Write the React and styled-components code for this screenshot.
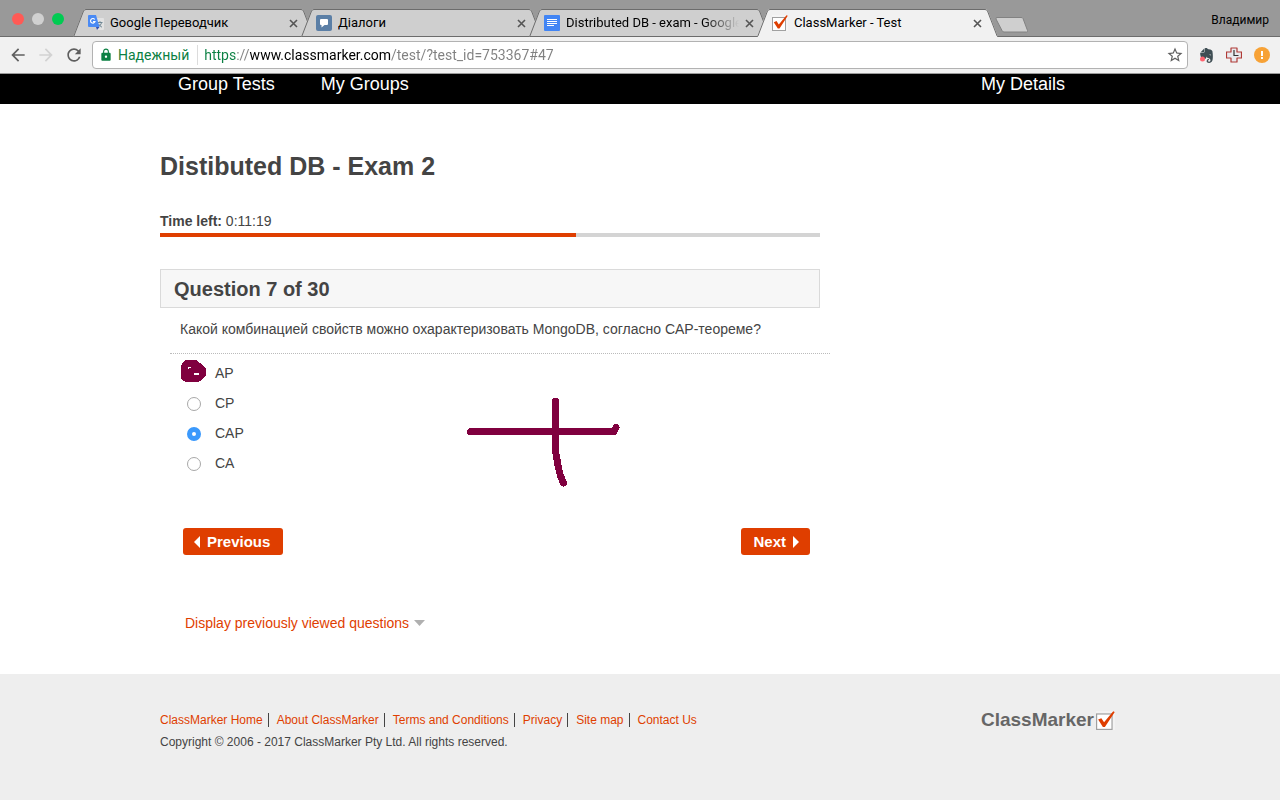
import React, { useState } from "react";
import styled, { createGlobalStyle, css } from "styled-components";
import { MdArrowBack, MdArrowForward, MdRefresh, MdStarBorder, MdLock } from "react-icons/md";
import { SiEvernote } from "react-icons/si";

const GlobalStyle = createGlobalStyle`
  *, *::before, *::after { box-sizing: border-box; }
  body {
    margin: 0;
    background: #fff;
    color: #444;
    font: 14px/20px "Liberation Sans", Arial, sans-serif;
  }
  button { font: inherit; border: 0; padding: 0; cursor: pointer; }
`;

const accent = "#df3e00";
const ink = "#80003f";
const edge = "#6c6c6c";

const Page = styled.div`
  display: flex;
  flex-direction: column;
  min-height: 100vh;
`;

/* Browser chrome */

const Chrome = styled.header`
  font-family: Roboto, sans-serif;
`;

const TabStrip = styled.div`
  display: flex;
  align-items: flex-end;
  height: 37px;
  padding-left: 12px;
  background: #999;
  box-shadow: inset 0 -1px ${edge};
`;

const WindowButtons = styled.div`
  display: flex;
  gap: 8px;
  align-self: center;
  margin-right: 9px;
`;

const WindowButton = styled.button`
  width: 12px;
  height: 12px;
  border-radius: 50%;
  background: ${(p) => p.$color};
`;

const Tabs = styled.div`
  display: flex;
  flex: 0 1 912px;
  min-width: 0;
`;

const TabFrame = styled.div`
  position: relative;
  z-index: ${(p) => (p.$active ? 1 : 0)};
  display: flex;
  flex: 1 1 0;
  min-width: 0;
  height: 28px;
  margin-right: -13px;
`;

const Slant = styled.svg`
  flex: none;
  width: 13px;
  height: 28px;
`;

const TabBody = styled.div`
  display: flex;
  flex: 1;
  align-items: center;
  min-width: 0;
  gap: 6px;
  padding: 0 3px 0 2px;
  background: ${(p) => p.$fill};
  border-top: 1px solid ${edge};
  border-bottom: 1px solid ${(p) => (p.$active ? p.$fill : edge)};
  svg { flex: none; }
`;

const TabTitle = styled.span`
  flex: 1;
  min-width: 0;
  overflow: hidden;
  white-space: nowrap;
  color: #000;
  font-size: 13px;
  line-height: 18px;
  ${(p) =>
    p.$fade &&
    css`
      mask-image: linear-gradient(to right, #000 calc(100% - 36px), transparent);
    `}
`;

const TabClose = styled.button`
  display: flex;
  background: none;
`;

const NewTab = styled.button`
  display: flex;
  align-self: center;
  margin: 11px 0 0 10px;
  background: none;
`;

const Profile = styled.button`
  align-self: center;
  margin: 2px 11px 0 auto;
  background: none;
  color: #000;
  font-size: 12px;
  line-height: 16px;
`;

const Toolbar = styled.div`
  display: flex;
  align-items: center;
  height: 37px;
  padding: 0 8px;
  gap: 8px;
  background: #f1f1f1;
  border-bottom: 1px solid #9a9a9a;
`;

const ToolButton = styled.button`
  display: flex;
  align-items: center;
  justify-content: center;
  width: 20px;
  height: 20px;
  background: none;
  color: ${(p) => (p.disabled ? "#d2d2d2" : "#5f5f5f")};
`;

const Omnibox = styled.div`
  display: flex;
  flex: 1;
  align-items: center;
  height: 28px;
  padding: 0 2px 0 6px;
  background: #fff;
  border: 1px solid #b2b2b2;
  border-radius: 4px;
  font-size: 14px;
`;

const Secure = styled.span`
  display: flex;
  align-items: center;
  gap: 5px;
  margin-right: 6px;
  padding-right: 8px;
  border-right: 1px solid #dcdcdc;
  color: #0b8043;
  line-height: 20px;
`;

const Address = styled.input`
  flex: 1;
  min-width: 0;
  height: 22px;
  padding: 0;
  border: 0;
  outline: 0;
  font: inherit;
  color: transparent;
  caret-color: #000;
  background: linear-gradient(
    to right,
    #0b8043 0 33px,
    #808080 33px 45px,
    #000 45px 187px,
    #808080 187px
  );
  -webkit-background-clip: text;
  background-clip: text;
`;

/* Site navigation */

const SiteNav = styled.nav`
  height: 30px;
  background: #000;
`;

const Container = styled.div`
  width: 100%;
  max-width: 960px;
  margin: 0 auto;
`;

const NavList = styled(Container)`
  display: flex;
  gap: 46px;
  padding: 0 55px 0 18px;
`;

const NavLink = styled.a`
  color: #fff;
  font-size: 18px;
  line-height: 20px;
  text-decoration: none;
  &:last-child { margin-left: auto; }
`;

/* Exam */

const Exam = styled.main`
  padding: 46px 0 41px;
`;

const Quiz = styled.form`
  max-width: 660px;
`;

const Title = styled.h1`
  margin: 0 0 29px;
  font-size: 25px;
  line-height: 32px;
`;

const TimeLeft = styled.p`
  margin: 0 0 2px;
`;

const TimeBar = styled.div`
  height: 4px;
  margin-bottom: 32px;
  background: #d4d4d4;
`;

const TimeUsed = styled.div`
  height: 100%;
  background: ${accent};
`;

const QuestionHeading = styled.h2`
  margin: 0;
  padding: 2px 13px 0;
  background: #f7f7f7;
  border: 1px solid #dadada;
  font-size: 20px;
  line-height: 35px;
`;

const QuestionSet = styled.fieldset`
  min-width: 0;
  margin: 0 -10px 0 10px;
  padding: 0;
  border: 0;
`;

const QuestionText = styled.legend`
  width: 100%;
  padding: 11px 10px 14px;
  border-bottom: 1px dotted #bbb;
`;

const Options = styled.div`
  position: relative;
  padding-top: 4px;
`;

const Option = styled.label`
  display: flex;
  align-items: center;
  gap: 14px;
  height: 30px;
  padding-left: 17px;
`;

const Radio = styled.input`
  appearance: none;
  width: 14px;
  height: 14px;
  margin: 1px 0 0;
  border: 1px solid #a8a8a8;
  border-radius: 50%;
  background: #fff;
  &:checked {
    border: 5px solid #3b99fc;
  }
`;

const InkDrawing = styled.svg`
  position: absolute;
  top: 0;
  left: 0;
  width: 460px;
  height: 140px;
  pointer-events: none;
`;

const Actions = styled.div`
  display: flex;
  justify-content: space-between;
  padding: 50px 10px 0 23px;
`;

const ActionButton = styled.button`
  display: flex;
  align-items: center;
  gap: 7px;
  height: 27px;
  padding: ${(p) => (p.$back ? "0 13px 0 11px" : "0 11px 0 12px")};
  border-radius: 3px;
  background: ${accent};
  color: #fff;
  font-size: 15px;
  font-weight: bold;
`;

const ViewedToggle = styled.button`
  display: flex;
  align-items: center;
  gap: 5px;
  margin: 58px 0 0 25px;
  background: none;
  color: ${accent};
`;

/* Footer */

const Footer = styled.footer`
  flex: 1;
  padding: 36px 0;
  background: #eee;
  font-size: 12px;
`;

const FooterRow = styled(Container)`
  display: flex;
  justify-content: space-between;
  padding-right: 5px;
`;

const FooterLinks = styled.nav`
  display: flex;
  align-items: center;
  height: 20px;
  margin-bottom: 2px;
`;

const FooterLink = styled.a`
  color: ${accent};
  line-height: 14px;
  text-decoration: none;
  & + & {
    margin-left: 5px;
    padding-left: 8px;
    border-left: 1px solid #444;
  }
`;

const Copyright = styled.p`
  margin: 0;
  line-height: 20px;
`;

const Logo = styled.a`
  display: flex;
  align-items: center;
  align-self: flex-start;
  height: 20px;
  gap: 2px;
  color: #666;
  font-size: 19px;
  font-weight: bold;
  text-decoration: none;
`;

/* Icons */

const TranslateIcon = () => (
  <svg width="16" height="16" viewBox="0 0 16 16">
    <path d="M6 3h9a1 1 0 0 1 1 1v10a1 1 0 0 1-1 1H9z" fill="#e2e2e2" />
    <path d="M9.500 7.500h5M12 6.200v1.300M13.600 7.500c-.5 2-1.700 3.400-3.600 4.600M10.600 9c.8 1.400 1.900 2.500 3.400 3.200" stroke="#6f8794" fill="none" />
    <path d="M1 0h7l3.500 12H1a1 1 0 0 1-1-1V1a1 1 0 0 1 1-1z" fill="#4a8af4" />
    <path d="M8 12h3.500L9 15z" fill="#3450b0" />
    <path d="M6.700 4.500A2.300 2.300 0 1 0 7 6.600H5" stroke="#fff" fill="none" strokeWidth="1.100" />
  </svg>
);

const ChatIcon = () => (
  <svg width="16" height="16" viewBox="0 0 16 16">
    <rect width="16" height="16" rx="2" fill="#5b7fa6" />
    <path d="M5 4h6a1 1 0 0 1 1 1v4a1 1 0 0 1-1 1H8.500L5.500 12.500V10H5a1 1 0 0 1-1-1V5a1 1 0 0 1 1-1z" fill="#fff" />
  </svg>
);

const DocsIcon = () => (
  <svg width="16" height="16" viewBox="0 0 16 16">
    <rect width="16" height="16" rx="1" fill="#4285f4" />
    <path d="M3 4.500h10M3 6.500h10M3 8.500h10M3 10.500h7" stroke="#fff" />
  </svg>
);

const CheckIcon = ({ size = 16 }) => (
  <svg width={size} height={size} viewBox="0 0 16 16">
    <path d="M0 0h16v16H0z" fill="#fff" fillOpacity="0.300" />
    <rect x="0.500" y="2.500" width="13" height="13" fill="#fff" stroke="#a0a0a0" />
    <path d="M1.800 7.200L4.500 6l2.300 3.500L14.500 0.300l1.300.5L7.500 13.500H5.800z" fill={accent} />
  </svg>
);

const CloseIcon = () => (
  <svg width="9" height="9" viewBox="0 0 9 9">
    <path d="M1 1l7 7M8 1L1 8" stroke="#555" strokeWidth="1.600" />
  </svg>
);

const TimerCrossIcon = () => (
  <svg width="16" height="16" viewBox="0 0 16 16">
    <path d="M5 1h6v4h4.500v6H11v4H5v-4H.5V5H5z" fill="#e8eaee" stroke="#b03a36" strokeWidth="1.200" strokeLinejoin="round" />
    <path d="M8 3v5.500h4.500" fill="none" stroke="#333" strokeWidth="1.200" />
  </svg>
);

const WarningIcon = () => (
  <svg width="16" height="16" viewBox="0 0 16 16">
    <circle cx="8" cy="8" r="8" fill="#f7a236" />
    <path d="M7 4h2v5H7zM7 10h2v2H7z" fill="#fff" />
  </svg>
);

const RecorderIcon = () => (
  <svg width="16" height="16" viewBox="0 0 16 16">
    <SiEvernote x="1" y="1" size={15} color="#3f4e54" />
    <circle cx="4.500" cy="12" r="2.500" fill="#ff6470" />
  </svg>
);

const Triangle = ({ direction }) => {
  const shapes = {
    left: [6, 12, "M6 0v12L0 6z", "#fff"],
    right: [6, 12, "M0 0v12l6-6z", "#fff"],
    down: [11, 6, "M0 0h11L5.500 6z", "#b0b0b0"],
  };
  const [width, height, d, fill] = shapes[direction];
  return (
    <svg width={width} height={height} viewBox={`0 0 ${width} ${height}`}>
      <path d={d} fill={fill} />
    </svg>
  );
};

function Tab({ icon, title, active, fade }) {
  const fill = active ? "#f1f1f1" : "#cfcfcf";
  const base = active ? fill : edge;
  return (
    <TabFrame $active={active}>
      <Slant viewBox="0 0 13 28">
        <path d="M0 28L10 2q1-2 3-2v28z" fill={fill} />
        <path d="M0.500 28L10.500 2q.8-1.500 2.500-1.500" fill="none" stroke={edge} />
        <path d="M1 27.500h12" stroke={base} />
      </Slant>
      <TabBody $fill={fill} $active={active}>
        {icon}
        <TabTitle $fade={fade}>{title}</TabTitle>
        <TabClose aria-label={`Close ${title}`}>
          <CloseIcon />
        </TabClose>
      </TabBody>
      <Slant viewBox="0 0 13 28">
        <path d="M0 0q2 0 3 2l10 26H0z" fill={fill} />
        <path d="M0 .5q1.700 0 2.500 1.500l10 26" fill="none" stroke={edge} />
        <path d="M0 27.500h12" stroke={base} />
      </Slant>
    </TabFrame>
  );
}

const options = ["AP", "CP", "CAP", "CA"];
const footerLinks = ["ClassMarker Home", "About ClassMarker", "Terms and Conditions", "Privacy", "Site map", "Contact Us"];

export default function App() {
  const [answer, setAnswer] = useState("CAP");
  return (
    <Page>
      <GlobalStyle />
      <Chrome>
        <TabStrip>
          <WindowButtons>
            <WindowButton $color="#ff5a55" aria-label="Close window" />
            <WindowButton $color="#d0d0d0" aria-label="Minimize window" />
            <WindowButton $color="#00cb52" aria-label="Zoom window" />
          </WindowButtons>
          <Tabs>
            <Tab icon={<TranslateIcon />} title="Google Переводчик" />
            <Tab icon={<ChatIcon />} title="Діалоги" />
            <Tab icon={<DocsIcon />} title="Distributed DB - exam - Google" fade />
            <Tab icon={<CheckIcon />} title="ClassMarker - Test" active />
          </Tabs>
          <NewTab aria-label="New tab">
            <svg width="34" height="17" viewBox="0 0 34 17">
              <path d="M2 1.500h24q1.500 0 2 1l4.500 12q.5 1.500-1 1.500H9q-1.500 0-2-1.500L1 3Q.5 1.500 2 1.500z" fill="#cfcfcf" stroke="#828282" />
            </svg>
          </NewTab>
          <Profile>Владимир</Profile>
        </TabStrip>
        <Toolbar>
          <ToolButton aria-label="Back"><MdArrowBack size={20} /></ToolButton>
          <ToolButton aria-label="Forward" disabled><MdArrowForward size={20} /></ToolButton>
          <ToolButton aria-label="Reload"><MdRefresh size={20} /></ToolButton>
          <Omnibox>
            <Secure><MdLock size={14} />Надежный</Secure>
            <Address aria-label="Address" defaultValue="https://www.classmarker.com/test/?test_id=753367#47" />
            <ToolButton aria-label="Bookmark"><MdStarBorder size={18} /></ToolButton>
          </Omnibox>
          <ToolButton aria-label="Evernote"><RecorderIcon /></ToolButton>
          <ToolButton aria-label="Timer"><TimerCrossIcon /></ToolButton>
          <ToolButton aria-label="Notice"><WarningIcon /></ToolButton>
        </Toolbar>
      </Chrome>

      <SiteNav>
        <NavList>
          <NavLink href="#tests">Group Tests</NavLink>
          <NavLink href="#groups">My Groups</NavLink>
          <NavLink href="#details">My Details</NavLink>
        </NavList>
      </SiteNav>

      <Exam>
        <Container>
          <Quiz onSubmit={(e) => e.preventDefault()}>
            <Title>Distibuted DB - Exam 2</Title>
            <TimeLeft><strong>Time left:</strong> 0:11:19</TimeLeft>
            <TimeBar>
              <TimeUsed style={{ width: "63%" }} />
            </TimeBar>
            <QuestionHeading>Question 7 of 30</QuestionHeading>
            <QuestionSet>
              <QuestionText>
                Какой комбинацией свойств можно охарактеризовать MongoDB, согласно CAP-теореме?
              </QuestionText>
              <Options>
                {options.map((o) => (
                  <Option key={o}>
                    <Radio type="radio" name="answer" value={o} checked={answer === o} onChange={() => setAnswer(o)} />
                    {o}
                  </Option>
                ))}
                <InkDrawing viewBox="0 0 460 140" aria-hidden="true" shapeRendering="crispEdges">
                  <path d="M15 6h11l4 3 6 6v6l-4 5-4 2H16l-5-3V12l2-4z" fill={ink} />
                  <path d="M18 13h3v1h-2v1h-1zM24 19h5v2h-5z" fill="#fff" />
                  <path d="M300.500 77.500H444l2-4M385.500 47v50l3 17 2 8 3 7" fill="none" stroke={ink} strokeWidth="7" strokeLinecap="round" strokeLinejoin="round" />
                </InkDrawing>
              </Options>
            </QuestionSet>
            <Actions>
              <ActionButton type="button" $back><Triangle direction="left" />Previous</ActionButton>
              <ActionButton type="submit">Next<Triangle direction="right" /></ActionButton>
            </Actions>
            <ViewedToggle type="button">Display previously viewed questions<Triangle direction="down" /></ViewedToggle>
          </Quiz>
        </Container>
      </Exam>

      <Footer>
        <FooterRow>
          <div>
            <FooterLinks>
              {footerLinks.map((l) => (
                <FooterLink key={l} href="#footer">{l}</FooterLink>
              ))}
            </FooterLinks>
            <Copyright>Copyright © 2006 - 2017 ClassMarker Pty Ltd. All rights reserved.</Copyright>
          </div>
          <Logo href="#home">ClassMarker<CheckIcon size={19} /></Logo>
        </FooterRow>
      </Footer>
    </Page>
  );
}
